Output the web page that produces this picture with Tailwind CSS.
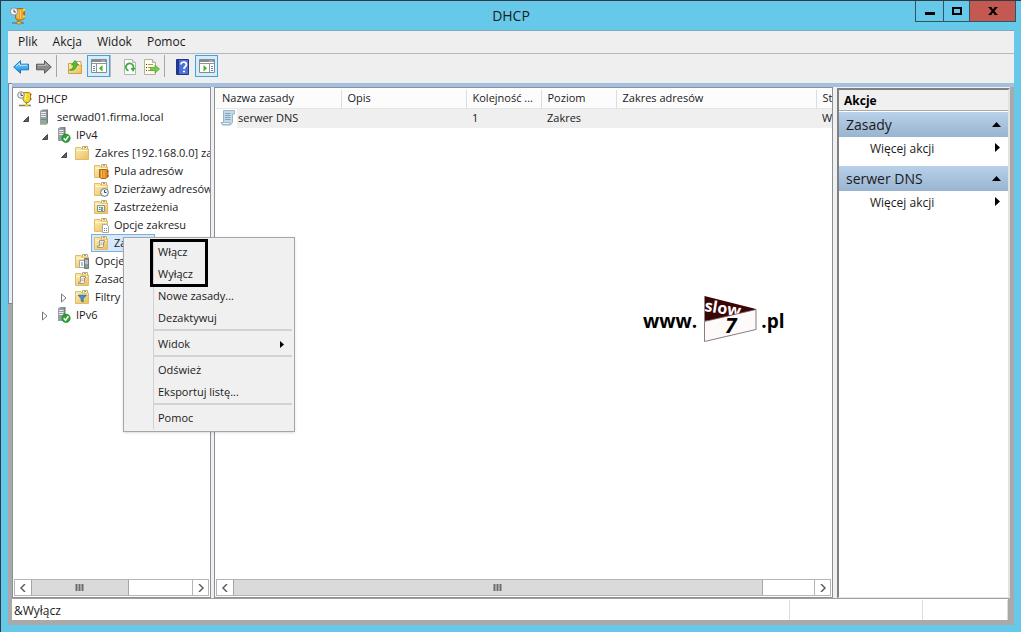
<!DOCTYPE html>
<html lang="pl">
  <head>
    <meta charset="UTF-8" />
    <meta name="viewport" content="width=device-width, initial-scale=1.0" />
    <title>DHCP</title>
    <script src="https://cdn.jsdelivr.net/npm/@tailwindcss/browser@4"></script>
  </head>
  <body
    class="relative flex h-screen flex-col overflow-hidden border-t border-l border-[#333b44] bg-[#66c9e9] font-['Open_Sans','Noto_Sans',sans-serif] text-xs text-[#1a1a1a]"
  >
    <!-- Shared icons -->
    <svg class="absolute h-0 w-0">
      <defs>
        <linearGradient id="gFolder" x1="0" y1="0" x2="1" y2="1">
          <stop offset="0" stop-color="#fdeeb4" />
          <stop offset="1" stop-color="#e9bf5c" />
        </linearGradient>
        <linearGradient id="gServer" x1="0" y1="0" x2="1" y2="0">
          <stop offset="0" stop-color="#aab0b5" />
          <stop offset="1" stop-color="#6f767c" />
        </linearGradient>
        <linearGradient id="gBlue" x1="0" y1="0" x2="0" y2="1">
          <stop offset="0" stop-color="#8ed8fb" />
          <stop offset="1" stop-color="#1389dc" />
        </linearGradient>
      </defs>
      <symbol id="folder" viewBox="0 0 16 16">
        <path d="M8.500 1.500h5v3h-5z" fill="#fff" stroke="#d2a850" />
        <path d="M10 2.500h2" stroke="#68a9d8" />
        <path d="M1.500 14.500v-12h5.500l1 1.500h6.500v10.500z" fill="url(#gFolder)" stroke="#e0bb68" />
        <path d="M2.500 5.500h11" stroke="#fff6d4" />
      </symbol>
      <symbol id="server" viewBox="0 0 16 16">
        <path d="M4 2l2-1.500h6V14l-1.500 1.500H4z" fill="url(#gServer)" />
        <path d="M4 2h6.500v13.500H4z" fill="#9aa2a8" />
        <path d="M5 3.500h5M5 5.500h5M5 7.500h5" stroke="#e9edf0" />
        <path d="M5 10.500h5" stroke="#7b8389" />
        <path d="M8.500 12.500h2v2h-2z" fill="#47e03a" />
      </symbol>
      <symbol id="serverOk" viewBox="0 0 16 16">
        <path d="M3 1.500L5 0h5.500v14H3z" fill="url(#gServer)" />
        <path d="M3 1.500h6V14H3z" fill="#969ea4" />
        <path d="M4 3.500h4.500M4 5.500h4.500M4 7.500h4" stroke="#e9edf0" />
        <circle cx="11" cy="11.300" r="4.200" fill="#29a52d" stroke="#14791b" stroke-width=".6" />
        <path d="M8.700 11.300l1.800 2 2.900-4" fill="none" stroke="#fff" stroke-width="1.500" />
      </symbol>
      <symbol id="scroll" viewBox="0 0 16 16">
        <path d="M3.500.500h11v3.500h-2v8.500l-2 2.500h-8l-1.500-2.500h2.500z" fill="#c3dae6" stroke="#9ab6c6" />
        <path d="M1.500 12.500h8.500v2H2.500z" fill="#eaf3f7" stroke="#8aa7b8" stroke-width=".7" />
        <path d="M5 3.500h5.500M5 5.500h5.500M5 7.500h5.500M5 9.500h5.500" stroke="#7ba6c6" />
      </symbol>
      <symbol id="scrollSmall" viewBox="0 0 16 16">
        <path d="M6.500 5.500h5v1.500h-1v4.500l-1 1h-5v-1.500h2z" fill="#f5f0df" stroke="#8b8676" stroke-width=".8" />
        <path d="M7.500 8h2M7.500 9.500h2" stroke="#a29c88" stroke-width=".7" />
      </symbol>
      <symbol id="expanded" viewBox="0 0 8 8">
        <path d="M6.500 1.500v5H1.500z" fill="#606060" stroke="#2b2b2b" stroke-width=".8" />
      </symbol>
      <symbol id="collapsed" viewBox="0 0 8 10">
        <path d="M1.500 1l4.500 4-4.500 4z" fill="#fff" stroke="#777" />
      </symbol>
      <symbol id="gutterGrip" viewBox="0 0 10 8">
        <path d="M1.500 0v7M4.500 0v7M7.500 0v7" stroke="#6c6c6c" stroke-width="2" />
      </symbol>
      <symbol id="left" viewBox="0 0 8 8">
        <path d="M6 0L2 4l4 4" fill="none" stroke="#606060" stroke-width="1.500" />
      </symbol>
      <symbol id="right" viewBox="0 0 8 8">
        <path d="M2 0l4 4-4 4" fill="none" stroke="#606060" stroke-width="1.500" />
      </symbol>
    </svg>

    <!-- Title bar -->
    <header class="relative flex h-[29px] shrink-0 items-center justify-center">
      <svg class="absolute top-1.5 left-2 h-[18px] w-[18px]" viewBox="0 0 18 18">
        <path d="M6.500 1.500h7l2 1.500v8l-2 2H8l-1.500-2z" fill="#e9a52b" stroke="#a96e15" />
        <path d="M9 4v7M11.500 3v9" stroke="#f9d377" />
        <path d="M14 3h2M14 9.500h2" stroke="#e7e13d" stroke-width="2" />
        <path d="M14 6.500h2" stroke="#df4c2c" stroke-width="2" />
        <circle cx="5" cy="4.500" r="3.700" fill="#f1f5f8" stroke="#82909c" />
        <path d="M5 2.500v2.500h2" fill="none" stroke="#46515c" />
        <path d="M9.500 13v2.500M3 16h12" stroke="#767d80" stroke-width="1.500" />
        <path d="M8 14.500h4v2.500H8z" fill="#f1cd35" stroke="#9b7619" stroke-width=".7" />
      </svg>
      <h1 class="text-sm leading-5">DHCP</h1>
      <div class="absolute top-0 right-[5px] flex h-[21px] border-x border-b border-[#2f5563]">
        <button aria-label="Minimalizuj" class="flex w-7 items-center justify-center border-r border-[#2f5563]">
          <svg class="h-3 w-3" viewBox="0 0 12 12"><path d="M1 7h10v3H1z" /></svg>
        </button>
        <button aria-label="Maksymalizuj" class="flex w-[26px] items-center justify-center border-r border-[#2f5563]">
          <svg class="h-3 w-3" viewBox="0 0 12 12"><path d="M2 3h8v6H2z" fill="none" stroke="#000" stroke-width="2" /></svg>
        </button>
        <button aria-label="Zamknij" class="flex w-[45px] items-center justify-center bg-[#c35950]">
          <svg class="h-3 w-3" viewBox="0 0 12 12"><path d="M3 2.500l6 7M9 2.500l-6 7" stroke="#000" stroke-width="2" /><path d="M1.500 2.500h3M7.500 2.500h3M1.500 9.500h3M7.500 9.500h3" stroke="#000" /></svg>
        </button>
      </div>
    </header>

    <div class="mr-[7px] mb-[7px] ml-[7px] flex min-h-0 flex-1 flex-col">
      <!-- Menu -->
      <nav class="flex h-6 shrink-0 items-center gap-[15px] border-t border-b border-t-[#7fa9bd] border-b-[#b4b7be] bg-[#efefef] pl-2.5">
        <button>Plik</button>
        <button>Akcja</button>
        <button>Widok</button>
        <button>Pomoc</button>
      </nav>

      <!-- Toolbar -->
      <div class="flex h-[29px] shrink-0 items-start bg-[#efefef] pt-px pl-[5px]">
        <button aria-label="Wstecz" class="mt-1">
          <svg class="h-4 w-4" viewBox="0 0 16 16"><path d="M.700 8L7.500 1.700v3.500h8v5.600h-8v3.500z" fill="url(#gBlue)" stroke="#1976bd" /><path d="M3 7.500l3.500-3.200v2H14" fill="none" stroke="#b5e8fd" /></svg>
        </button>
        <button aria-label="Dalej" class="mt-1 ml-[7px]">
          <svg class="h-4 w-4" viewBox="0 0 16 16"><path d="M15.300 8L8.500 1.700v3.500h-8v5.600h8v3.500z" fill="#8b8b8b" stroke="#5d5d5d" /><path d="M2 6.500h7.500v-2l2.500 2.500" fill="none" stroke="#b9b9b9" /></svg>
        </button>
        <span class="ml-1 h-[22px] w-px bg-[#a5a5a5]"></span>
        <button aria-label="W górę" class="mt-1 ml-2.5">
          <svg class="h-4 w-4" viewBox="0 0 16 16"><path d="M1.500 14.500V4.500H6l1 1.500h7.500v8.500z" fill="url(#gFolder)" stroke="#cfa142" /><path d="M9.500 4.500v-2h4.500V6" fill="#fff" stroke="#cfa142" /><path d="M2.500 11c3-.500 4-2.500 4-5H4.500L8 1.500 11.500 6h-2c0 4-3 6-7 5z" fill="#55c22c" stroke="#2a8e16" stroke-width=".7" /></svg>
        </button>
        <button aria-label="Pokaż drzewo konsoli" class="ml-1 flex h-[22px] w-[23px] items-center justify-center border border-[#3fa6dc] bg-[#d8ebf8]">
          <svg class="h-4 w-4" viewBox="0 0 16 16"><path d="M.500 1.500h15v13H.500z" fill="#fff" stroke="#868c92" /><path d="M1 3h14" stroke="#848b91" stroke-width="2" /><path d="M10.500 3h1M12.500 3h1" stroke="#fff" /><path d="M1 5.500h14M5.500 6v8" stroke="#8d959b" /><path d="M2 8.500h2M2 10.500h2M2 12.500h2" stroke="#4b8ac3" /><path d="M11.500 7v6.500L8 10.200z" fill="#3fb527" /></svg>
        </button>
        <span class="h-[22px] w-px bg-[#b9b9b9]"></span>
        <button aria-label="Odśwież" class="mt-1 ml-[11px]">
          <svg class="h-4 w-4" viewBox="0 0 16 16"><path d="M2.500.500h8l3 3v12h-11z" fill="#fff" stroke="#b0b4b6" /><path d="M10.500.500v3h3" fill="#e5e8ea" stroke="#b0b4b6" /><path d="M6.500 11.700A3.800 3.800 0 1 1 11 10" fill="none" stroke="#39ae39" stroke-width="1.800" /><path d="M8.500 9h5l-2.500 4z" fill="#39ae39" /></svg>
        </button>
        <button aria-label="Eksportuj listę" class="mt-1 ml-1.5">
          <svg class="h-4 w-4" viewBox="0 0 16 16"><path d="M.500.500h8l3 3v12H.500z" fill="#fffbe9" stroke="#b0b0a4" /><path d="M8.500.500v3h3" fill="#e9e7db" stroke="#b0b0a4" /><path d="M2 5.500h1M2 8.500h1M2 11.500h1" stroke="#444" /><path d="M4 5.500h5M4 8.500h3M4 11.500h5" stroke="#b49b54" /><path d="M6.500 8.500H11v-2.500l4.500 4-4.500 4v-2.500H6.500z" fill="#76cb4b" stroke="#4da42b" stroke-width=".7" /></svg>
        </button>
        <span class="ml-1 h-[22px] w-px bg-[#a5a5a5]"></span>
        <button aria-label="Pomoc" class="mt-1 ml-2.5">
          <svg class="h-4 w-4" viewBox="0 0 16 16"><path d="M1.500.500h12v15h-12z" fill="#4f70d6" stroke="#20368c" /><path d="M2 1h2v14H2z" fill="#22398f" /><path d="M6 5.500c0-3.500 5.500-3 5.500 0 0 2-2.500 2-2.500 4.500" fill="none" stroke="#fff" stroke-width="1.800" /><circle cx="9" cy="12.500" r="1.100" fill="#fff" /></svg>
        </button>
        <button aria-label="Pokaż okienko akcji" class="ml-1 flex h-[22px] w-[23px] items-center justify-center border border-[#3fa6dc] bg-[#d8ebf8]">
          <svg class="h-4 w-4" viewBox="0 0 16 16"><path d="M.500 1.500h15v13H.500z" fill="#fff" stroke="#868c92" /><path d="M1 3h14" stroke="#848b91" stroke-width="2" /><path d="M10.500 3h1M12.500 3h1" stroke="#fff" /><path d="M1 5.500h14M10.500 6v8" stroke="#8d959b" /><path d="M12 8.500h2M12 10.500h2M12 12.500h2" stroke="#4b8ac3" /><path d="M4.500 7v6.500L8 10.200z" fill="#3fb527" /></svg>
        </button>
      </div>

      <!-- Console area -->
      <div class="flex min-h-0 flex-1 bg-[#a9a9a9] pb-[5px]">
        <div class="h-[221px] w-1 shrink-0 border-t border-b border-l border-[#7d8794] bg-[#e6eefa]"></div>
        <div class="flex min-w-0 flex-1 flex-col">
          <div class="h-1 shrink-0 bg-[#a5bfdf]"></div>
          <div class="mr-1 flex min-h-0 flex-1 bg-[#f0f0f0]">
            <!-- Tree -->
            <section class="flex w-[199px] shrink-0 flex-col border border-[#8b8f97] bg-white">
              <ul class="min-h-0 flex-1 overflow-hidden pt-0.5 pr-px text-[11px] leading-[18px] whitespace-nowrap">
                <li class="flex h-[18px] items-center gap-[5px] pl-1">
                  <svg class="h-4 w-4 shrink-0" viewBox="0 0 16 16"><path d="M6 1.500h6l1.500 1v6.500l-2 2.500H8L6 9z" fill="#eed72b" stroke="#aa8b13" /><path d="M8.500 3v6" stroke="#fff48e" stroke-width="1.500" /><path d="M13 3.500h1.500M13 8h1.500" stroke="#c44025" stroke-width="1.500" /><circle cx="4" cy="4" r="3.300" fill="#eee" stroke="#8b8b8b" /><path d="M4 2v2.500h2" fill="none" stroke="#555" /><path d="M9.500 12v2.500M2 14.500h12" stroke="#7b7b7b" stroke-width="1.300" /><path d="M8 13h3.500v2.500H8z" fill="#e6d32d" /></svg>
                  DHCP
                </li>
                <li class="flex h-[18px] items-center gap-[5px] pl-2">
                  <svg class="mt-1 h-2 w-2.5 shrink-0"><use href="#expanded" /></svg>
                  <svg class="h-4 w-4 shrink-0"><use href="#server" /></svg>
                  serwad01.firma.local
                </li>
                <li class="flex h-[18px] items-center gap-[5px] pl-[27px]">
                  <svg class="mt-1 h-2 w-2.5 shrink-0"><use href="#expanded" /></svg>
                  <svg class="h-4 w-4 shrink-0"><use href="#serverOk" /></svg>
                  IPv4
                </li>
                <li class="flex h-[18px] items-center gap-[5px] pl-[46px]">
                  <svg class="mt-1 h-2 w-2.5 shrink-0"><use href="#expanded" /></svg>
                  <svg class="h-4 w-4 shrink-0"><use href="#folder" /></svg>
                  Zakres [192.168.0.0] zakres
                </li>
                <li class="flex h-[18px] items-center gap-[5px] pl-20">
                  <svg class="h-4 w-4 shrink-0" viewBox="0 0 16 16"><use href="#folder" /><path d="M6.500 6.500h7l1.500 1v6l-2 2h-5l-1.500-1.500z" fill="#d98d22" stroke="#945711" stroke-width=".8" /><path d="M8.500 7v8M11 7v8" stroke="#f2bb5c" /><path d="M14 8h1.500M14 13h1.500" stroke="#c92e1a" stroke-width="1.500" /></svg>
                  Pula adresów
                </li>
                <li class="flex h-[18px] items-center gap-[5px] pl-20">
                  <svg class="h-4 w-4 shrink-0" viewBox="0 0 16 16"><use href="#folder" /><circle cx="11.500" cy="11.500" r="3.900" fill="#eef4f9" stroke="#667685" /><path d="M11.500 9v2.500h2" fill="none" stroke="#334b60" /></svg>
                  Dzierżawy adresów
                </li>
                <li class="flex h-[18px] items-center gap-[5px] pl-20">
                  <svg class="h-4 w-4 shrink-0" viewBox="0 0 16 16"><use href="#folder" /><path d="M4.500 6.500h7v6h-7z" fill="#eef1e6" stroke="#8d9482" /><path d="M6 8.500h1.500M6 10.500h1.500" stroke="#3e8b4c" /><path d="M9 8v4" stroke="#4c7e9e" stroke-width="1.500" /></svg>
                  Zastrzeżenia
                </li>
                <li class="flex h-[18px] items-center gap-[5px] pl-20">
                  <svg class="h-4 w-4 shrink-0" viewBox="0 0 16 16"><use href="#folder" /><path d="M9.500 7.500h4l2 2v6h-6z" fill="#fff" stroke="#a4a8ad" /><path d="M11 11.500h1M13 11.500h1M11 13.500h1M13 13.500h1" stroke="#73839a" /></svg>
                  Opcje zakresu
                </li>
                <li class="flex h-[18px] pl-[78px]">
                  <span class="flex h-[18px] items-center gap-[5px] border border-[#7daee0] bg-[#d6e8fb] px-px pr-1">
                    <svg class="h-4 w-4 shrink-0" viewBox="0 0 16 16"><use href="#folder" /><use href="#scrollSmall" /></svg>
                    Zasady
                  </span>
                </li>
                <li class="flex h-[18px] items-center gap-[5px] pl-[61px]">
                  <svg class="h-4 w-4 shrink-0" viewBox="0 0 16 16"><use href="#folder" /><path d="M5.500 7.500h5v7h-5z" fill="#fff" stroke="#a4a8ad" /><path d="M7 10h2M7 12h2" stroke="#73839a" /><path d="M10.500 5.500h4v10h-4z" fill="#8d969c" stroke="#6f787e" /><path d="M11 8h3M11 10h3" stroke="#e5eaed" /><path d="M12.500 12.500h1.500v1.500h-1.500z" fill="#43d637" /></svg>
                  Opcje serwera
                </li>
                <li class="flex h-[18px] items-center gap-[5px] pl-[61px]">
                  <svg class="h-4 w-4 shrink-0" viewBox="0 0 16 16"><use href="#folder" /><use href="#scrollSmall" /></svg>
                  Zasady
                </li>
                <li class="flex h-[18px] items-center gap-[5px] pl-[46px]">
                  <svg class="mt-0.5 h-2.5 w-2.5 shrink-0"><use href="#collapsed" /></svg>
                  <svg class="h-4 w-4 shrink-0" viewBox="0 0 16 16"><use href="#folder" /><path d="M4 6h8.500L9.200 9.700V13l-2-1V9.700z" fill="#4c8fc4" stroke="#34678f" stroke-width=".7" /></svg>
                  Filtry
                </li>
                <li class="flex h-[18px] items-center gap-[5px] pl-[27px]">
                  <svg class="mt-0.5 h-2.5 w-2.5 shrink-0"><use href="#collapsed" /></svg>
                  <svg class="h-4 w-4 shrink-0"><use href="#serverOk" /></svg>
                  IPv6
                </li>
              </ul>
              <div class="mx-px mb-px flex h-[17px] shrink-0 border border-[#b5b5b5]">
                <button aria-label="W lewo" class="flex w-4 items-center justify-center"><svg class="h-2 w-2"><use href="#left" /></svg></button>
                <div class="flex w-[98px] items-center justify-center border-x border-[#a6a6a6] bg-[#dadada]"><svg class="h-2 w-2.5"><use href="#gutterGrip" /></svg></div>
                <button aria-label="W prawo" class="ml-auto flex w-4 items-center justify-center border-l border-[#b5b5b5]"><svg class="h-2 w-2"><use href="#right" /></svg></button>
              </div>
            </section>

            <!-- Policy list -->
            <section class="relative ml-[3px] flex min-w-0 flex-1 flex-col border border-[#8b8f97] bg-white">
              <div class="min-h-0 flex-1 overflow-hidden pt-0.5 pr-px pl-px">
                <table class="w-[720px] table-fixed border-collapse text-left text-[11px] whitespace-nowrap">
                  <colgroup>
                    <col class="w-[125px]" />
                    <col class="w-[125px]" />
                    <col class="w-[75px]" />
                    <col class="w-[75px]" />
                    <col class="w-[200px]" />
                    <col />
                  </colgroup>
                  <thead>
                    <tr class="h-[18px] border-b border-[#e6e6e6] bg-[#fcfcfc]">
                      <th class="border-r border-[#dedede] p-0 pl-1.5 font-normal">Nazwa zasady</th>
                      <th class="border-r border-[#dedede] p-0 pl-1.5 font-normal">Opis</th>
                      <th class="border-r border-[#dedede] p-0 pl-1.5 font-normal">Kolejność ...</th>
                      <th class="border-r border-[#dedede] p-0 pl-1.5 font-normal">Poziom</th>
                      <th class="border-r border-[#dedede] p-0 pl-1.5 font-normal">Zakres adresów</th>
                      <th class="p-0 pl-1.5 font-normal">Stan</th>
                    </tr>
                  </thead>
                  <tbody>
                    <tr class="h-[19px] bg-[#efefef]">
                      <td class="p-0">
                        <span class="flex items-center"><span class="flex h-[19px] w-[21px] items-center bg-white pl-1"><svg class="h-4 w-4"><use href="#scroll" /></svg></span><span class="pl-px">serwer DNS</span></span>
                      </td>
                      <td class="p-0"></td>
                      <td class="p-0 pl-1.5">1</td>
                      <td class="p-0 pl-1.5">Zakres</td>
                      <td class="p-0"></td>
                      <td class="p-0 pl-1.5">Włączone</td>
                    </tr>
                  </tbody>
                </table>
              </div>
              <!-- Watermark -->
              <div class="absolute top-[207px] left-[428px] flex items-center text-[19px] leading-6 font-bold text-black">
                <span class="pt-1">www.</span>
                <svg class="ml-1.5 h-12 w-14" viewBox="0 0 56 48">
                  <path d="M1.500 1L53 14v5L1.500 26z" fill="#3a0505" />
                  <text x="1" y="16" transform="rotate(9 1 16)" fill="#fff" font-size="16" font-weight="700">slow</text>
                  <path d="M1.500 26.500L53 14.500v20L1.500 46.500z" fill="#fffafa" stroke="#6f5a5a" stroke-width=".8" />
                  <text x="22" y="38" fill="#000" font-size="21" font-weight="700" font-style="italic">7</text>
                </svg>
                <span class="pt-1 pl-0.5">.pl</span>
              </div>
              <div class="mx-px mb-px flex h-[17px] shrink-0 border border-[#b5b5b5]">
                <button aria-label="W lewo" class="flex w-4 items-center justify-center"><svg class="h-2 w-2"><use href="#left" /></svg></button>
                <div class="flex w-[530px] items-center justify-center border-x border-[#a6a6a6] bg-[#dadada]"><svg class="h-2 w-2.5"><use href="#gutterGrip" /></svg></div>
                <button aria-label="W prawo" class="ml-auto flex w-4 items-center justify-center border-l border-[#b5b5b5]"><svg class="h-2 w-2"><use href="#right" /></svg></button>
              </div>
            </section>

            <!-- Actions -->
            <aside class="mt-px ml-1 w-[173px] shrink-0 border-t-2 border-r-2 border-b border-l-2 border-t-[#808080] border-r-[#e3e3e3] border-b-[#e3e3e3] border-l-[#808080] bg-white">
              <h2 class="h-[21px] border-b border-[#a9a9a9] bg-[#f0f0f0] pl-[5px] leading-[21px] font-bold text-black">Akcje</h2>
              <button class="mt-px flex h-[25px] w-full items-center justify-between bg-linear-to-b from-[#b9d1ea] to-[#99b4d1] pr-[7px] pl-[7px] text-sm">
                Zasady
                <svg class="h-[5px] w-[9px]" viewBox="0 0 9 5"><path d="M4.500 0L9 5H0z" /></svg>
              </button>
              <button class="flex h-[29px] w-full items-start justify-between pt-1 pr-2 pl-[31px] leading-4">
                Więcej akcji
                <svg class="mt-0.5 h-[9px] w-[5px]" viewBox="0 0 5 9"><path d="M0 0l5 4.500L0 9z" /></svg>
              </button>
              <button class="flex h-[25px] w-full items-center justify-between bg-linear-to-b from-[#b9d1ea] to-[#99b4d1] pr-[7px] pl-[7px] text-sm">
                serwer DNS
                <svg class="h-[5px] w-[9px]" viewBox="0 0 9 5"><path d="M4.500 0L9 5H0z" /></svg>
              </button>
              <button class="flex h-[29px] w-full items-start justify-between pt-1 pr-2 pl-[31px] leading-4">
                Więcej akcji
                <svg class="mt-0.5 h-[9px] w-[5px]" viewBox="0 0 5 9"><path d="M0 0l5 4.500L0 9z" /></svg>
              </button>
            </aside>
          </div>

          <!-- Status bar -->
          <footer class="mr-1.5 flex h-[22px] shrink-0 border-t border-[#a0a0a0] bg-white pt-px">
            <span class="flex-1 pl-0.5 leading-[22px]">&amp;Wyłącz</span>
            <span class="w-[133px] border-l border-[#dcdcdc]"></span>
            <span class="w-[86px] border-x border-[#dcdcdc]"></span>
          </footer>
        </div>
      </div>
    </div>

    <!-- Context menu -->
    <div role="menu" class="absolute top-[236px] left-[122px] w-[172px] border border-[#a5a5a5] bg-[#f0f0f0] pt-[3px] pr-0.5 pb-0.5 pl-[29px] text-[11px] shadow-sm">
      <div class="flex flex-col border-l border-[#d2d2d2]">
        <button role="menuitem" class="h-[22px] pl-1 text-left">Włącz</button>
        <button role="menuitem" class="h-[22px] pl-1 text-left">Wyłącz</button>
        <button role="menuitem" class="h-[22px] pl-1 text-left">Nowe zasady...</button>
        <button role="menuitem" class="h-[22px] pl-1 text-left">Dezaktywuj</button>
        <hr class="mb-0.5 border-t-2 border-[#d2d2d2]" />
        <button role="menuitem" class="flex h-[22px] items-center justify-between pr-2 pl-1 text-left">
          Widok
          <svg class="h-[7px] w-1" viewBox="0 0 4 7"><path d="M0 0l4 3.500L0 7z" /></svg>
        </button>
        <hr class="mb-0.5 border-t-2 border-[#d2d2d2]" />
        <button role="menuitem" class="h-[22px] pl-1 text-left">Odśwież</button>
        <button role="menuitem" class="h-[22px] pl-1 text-left">Eksportuj listę...</button>
        <hr class="mb-0.5 border-t-2 border-[#d2d2d2]" />
        <button role="menuitem" class="h-[22px] pl-1 text-left">Pomoc</button>
      </div>
      <div class="pointer-events-none absolute top-px left-[26px] h-12 w-[58px] border-3 border-black"></div>
    </div>
  </body>
</html>
